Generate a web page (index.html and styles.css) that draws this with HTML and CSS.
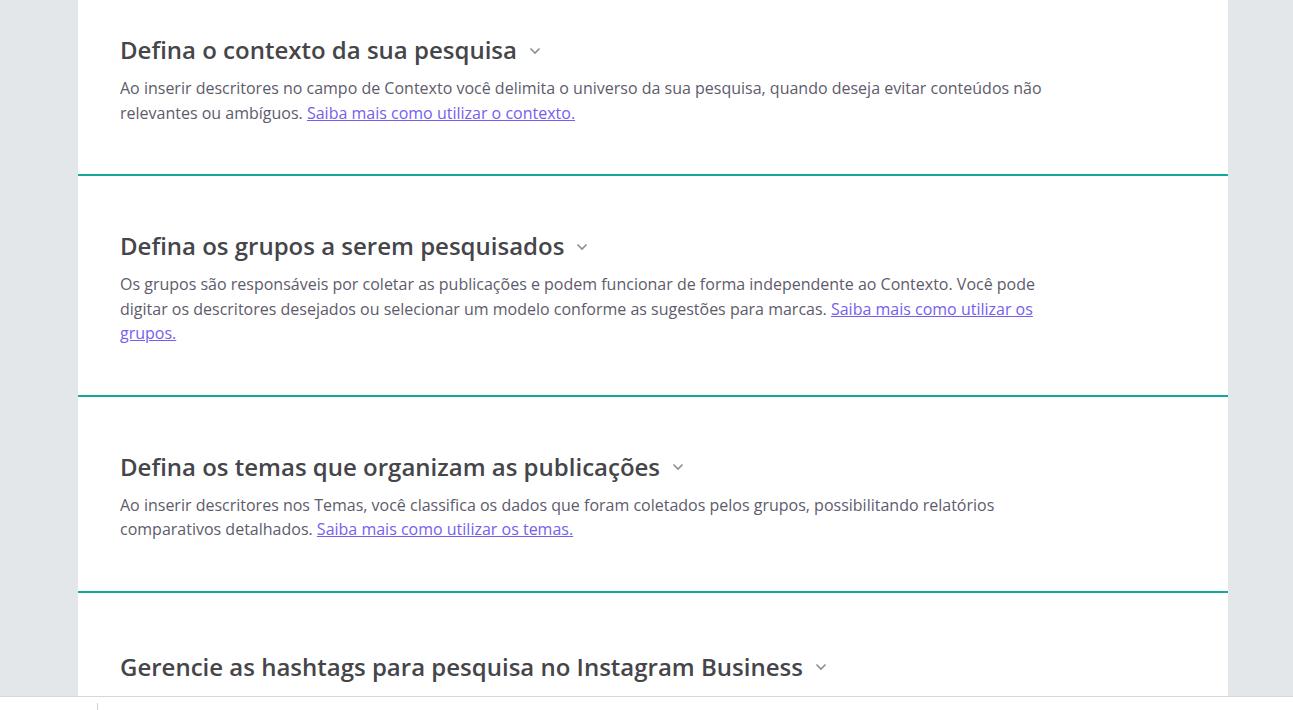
FILE: index.html
```html
<!DOCTYPE html>
<html lang="pt-BR">
<head>
  <meta charset="UTF-8" />
  <meta name="viewport" content="width=device-width, initial-scale=1.0" />
  <title>Configurar pesquisa</title>
  <link rel="stylesheet" href="styles.css">
</head>
<body>

  <div class="setup-card">

    <section class="setup-step first">
      <h2>Defina o contexto da sua pesquisa
        <svg class="chevron" width="12" height="8" viewBox="0 0 12 8"><polyline points="1.5,1.5 6,6 10.5,1.5" /></svg>
      </h2>
      <p>Ao inserir descritores no campo de Contexto você delimita o universo da sua pesquisa, quando deseja evitar conteúdos não relevantes ou ambíguos. <a href="#">Saiba mais como utilizar o contexto.</a></p>
    </section>

    <section class="setup-step">
      <h2>Defina os grupos a serem pesquisados
        <svg class="chevron" width="12" height="8" viewBox="0 0 12 8"><polyline points="1.5,1.5 6,6 10.5,1.5" /></svg>
      </h2>
      <p>Os grupos são responsáveis por coletar as publicações e podem funcionar de forma independente ao Contexto. Você pode digitar os descritores desejados ou selecionar um modelo conforme as sugestões para marcas. <a href="#">Saiba mais como utilizar os grupos.</a></p>
    </section>

    <section class="setup-step">
      <h2>Defina os temas que organizam as publicações
        <svg class="chevron" width="12" height="8" viewBox="0 0 12 8"><polyline points="1.5,1.5 6,6 10.5,1.5" /></svg>
      </h2>
      <p>Ao inserir descritores nos Temas, você classifica os dados que foram coletados pelos grupos, possibilitando relatórios comparativos detalhados. <a href="#">Saiba mais como utilizar os temas.</a></p>
    </section>

    <section class="setup-step last">
      <h2>Gerencie as hashtags para pesquisa no Instagram Business
        <svg class="chevron" width="12" height="8" viewBox="0 0 12 8"><polyline points="1.5,1.5 6,6 10.5,1.5" /></svg>
      </h2>
      <p>Adicione as hashtags que deseja monitorar nas publicações do Instagram Business vinculado à sua conta. <a href="#">Saiba mais como utilizar as hashtags.</a></p>
    </section>

  </div>

  <div class="bottom-bar">
    <span class="bar-divider"></span>
  </div>

</body>
</html>
```

FILE: styles.css
```css
body {
  font-family: 'Open Sans', 'Noto Sans', sans-serif;
  background-color: #e3e7ea;
  margin: 0;
  padding: 0;
}

.setup-card {
  width: 1150px;
  margin-left: 78px;
  background-color: #ffffff;
  min-height: 100vh;
}

.setup-step {
  padding: 54px 42px 49px;
  border-bottom: 2px solid #13a89e;
}

.setup-step.first {
  padding-top: 34px;
}

.setup-step.last {
  padding-top: 58px;
  border-bottom: none;
}

.setup-step h2 {
  margin: 0 0 10px;
  font-size: 24px;
  line-height: 32px;
  font-weight: 600;
  color: #45454a;
  display: flex;
  align-items: center;
  gap: 12px;
}

.chevron {
  fill: none;
  stroke: #8c8c94;
  stroke-width: 1.6;
  margin-top: 1px;
}

.setup-step p {
  margin: 0;
  max-width: 930px;
  font-size: 16px;
  line-height: 24.5px;
  color: #5e5b6c;
}

.setup-step a {
  color: #7560ee;
  text-decoration: underline;
}

.bottom-bar {
  position: fixed;
  left: 0;
  right: 0;
  bottom: 0;
  height: 13px;
  background-color: #ffffff;
  border-top: 1px solid #d8d8d8;
}

.bar-divider {
  position: absolute;
  left: 97px;
  top: 6px;
  width: 1px;
  height: 7px;
  background-color: #d0d0d0;
}
```
